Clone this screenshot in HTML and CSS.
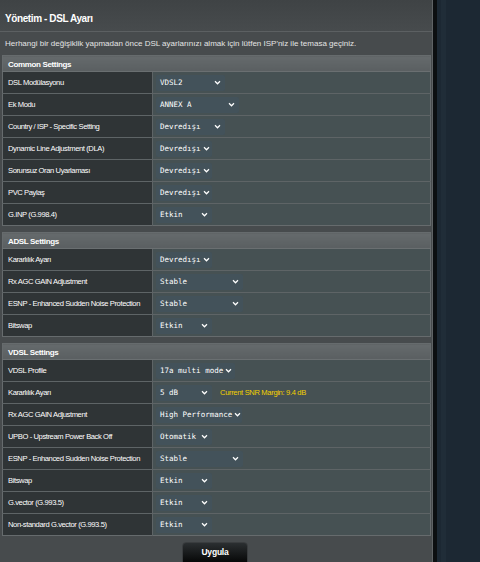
FILE: index.html
```html
<!DOCTYPE html>
<html lang="tr">
<head>
<meta charset="utf-8">
<title>Yönetim - DSL Ayarı</title>
<link rel="stylesheet" href="styles.css">
</head>
<body>
<div class="page">
  <main class="panel">
    <h1 class="title">Yönetim - DSL Ayarı</h1>
    <p class="desc">Herhangi bir değişiklik yapmadan önce DSL ayarlarınızı almak için lütfen ISP'niz ile temasa geçiniz.</p>

    <table class="settings">
      <tr><th colspan="2">Common Settings</th></tr>
      <tr><td class="label">DSL Modülasyonu</td><td><div class="select w69"><span>VDSL2</span><svg viewBox="0 0 8 6"><path d="M1 1.5 L4 4.5 L7 1.5"/></svg></div></td></tr>
      <tr><td class="label">Ek Modu</td><td><div class="select w83"><span>ANNEX A</span><svg viewBox="0 0 8 6"><path d="M1 1.5 L4 4.5 L7 1.5"/></svg></div></td></tr>
      <tr><td class="label">Country / ISP - Specific Setting</td><td><div class="select w69"><span>Devredışı</span><svg viewBox="0 0 8 6"><path d="M1 1.5 L4 4.5 L7 1.5"/></svg></div></td></tr>
      <tr><td class="label">Dynamic Line Adjustment (DLA)</td><td><div class="select w56"><span>Devredışı</span><svg viewBox="0 0 8 6"><path d="M1 1.5 L4 4.5 L7 1.5"/></svg></div></td></tr>
      <tr><td class="label">Sorunsuz Oran Uyarlaması</td><td><div class="select w56"><span>Devredışı</span><svg viewBox="0 0 8 6"><path d="M1 1.5 L4 4.5 L7 1.5"/></svg></div></td></tr>
      <tr><td class="label">PVC Paylaş</td><td><div class="select w56"><span>Devredışı</span><svg viewBox="0 0 8 6"><path d="M1 1.5 L4 4.5 L7 1.5"/></svg></div></td></tr>
      <tr><td class="label">G.INP (G.998.4)</td><td><div class="select w56"><span>Etkin</span><svg viewBox="0 0 8 6"><path d="M1 1.5 L4 4.5 L7 1.5"/></svg></div></td></tr>
    </table>

    <table class="settings">
      <tr><th colspan="2">ADSL Settings</th></tr>
      <tr><td class="label">Kararlılık Ayarı</td><td><div class="select w56"><span>Devredışı</span><svg viewBox="0 0 8 6"><path d="M1 1.5 L4 4.5 L7 1.5"/></svg></div></td></tr>
      <tr><td class="label">Rx AGC GAIN Adjustment</td><td><div class="select w87"><span>Stable</span><svg viewBox="0 0 8 6"><path d="M1 1.5 L4 4.5 L7 1.5"/></svg></div></td></tr>
      <tr><td class="label">ESNP - Enhanced Sudden Noise Protection</td><td><div class="select w87"><span>Stable</span><svg viewBox="0 0 8 6"><path d="M1 1.5 L4 4.5 L7 1.5"/></svg></div></td></tr>
      <tr><td class="label">Bitswap</td><td><div class="select w56"><span>Etkin</span><svg viewBox="0 0 8 6"><path d="M1 1.5 L4 4.5 L7 1.5"/></svg></div></td></tr>
    </table>

    <table class="settings">
      <tr><th colspan="2">VDSL Settings</th></tr>
      <tr><td class="label">VDSL Profile</td><td><div class="select w79"><span>17a multi mode</span><svg viewBox="0 0 8 6"><path d="M1 1.5 L4 4.5 L7 1.5"/></svg></div></td></tr>
      <tr><td class="label">Kararlılık Ayarı</td><td><div class="inline"><div class="select w56"><span>5 dB</span><svg viewBox="0 0 8 6"><path d="M1 1.5 L4 4.5 L7 1.5"/></svg></div><span class="snr">Current SNR Margin: 9.4 dB</span></div></td></tr>
      <tr><td class="label">Rx AGC GAIN Adjustment</td><td><div class="select w86"><span>High Performance</span><svg viewBox="0 0 8 6"><path d="M1 1.5 L4 4.5 L7 1.5"/></svg></div></td></tr>
      <tr><td class="label">UPBO - Upstream Power Back Off</td><td><div class="select w56"><span>Otomatik</span><svg viewBox="0 0 8 6"><path d="M1 1.5 L4 4.5 L7 1.5"/></svg></div></td></tr>
      <tr><td class="label">ESNP - Enhanced Sudden Noise Protection</td><td><div class="select w87"><span>Stable</span><svg viewBox="0 0 8 6"><path d="M1 1.5 L4 4.5 L7 1.5"/></svg></div></td></tr>
      <tr><td class="label">Bitswap</td><td><div class="select w56"><span>Etkin</span><svg viewBox="0 0 8 6"><path d="M1 1.5 L4 4.5 L7 1.5"/></svg></div></td></tr>
      <tr><td class="label">G.vector (G.993.5)</td><td><div class="select w56"><span>Etkin</span><svg viewBox="0 0 8 6"><path d="M1 1.5 L4 4.5 L7 1.5"/></svg></div></td></tr>
      <tr><td class="label">Non-standard G.vector (G.993.5)</td><td><div class="select w56"><span>Etkin</span><svg viewBox="0 0 8 6"><path d="M1 1.5 L4 4.5 L7 1.5"/></svg></div></td></tr>
    </table>

    <div class="actions"><button class="apply" type="button">Uygula</button></div>
  </main>
  <aside class="side"><div class="side-strip"></div></aside>
</div>
</body>
</html>
```

FILE: styles.css
```css
* { box-sizing: border-box; }

html, body {
  margin: 0;
  padding: 0;
  height: 562px;
  overflow: hidden;
  background: #1c2832;
}

body {
  font-family: "Liberation Sans", Arial, sans-serif;
  color: #ffffff;
}

.page {
  display: flex;
  height: 562px;
}

.panel {
  width: 433px;
  flex: none;
  background: #474b4d;
  border-right: 1px solid #5f6365;
  padding: 0 2px 0 2px;
}

.side {
  flex: 1;
  display: flex;
  border-left: 4px solid #0c0f11;
  background: #1c2833;
}

.side-strip {
  width: 5px;
  margin-left: 4px;
  background: #202d38;
}

.title {
  height: 32px;
  margin: 0 -2px;
  padding: 12px 0 0 5px;
  font-size: 10px;
  letter-spacing: -0.4px;
  font-weight: bold;
  line-height: 13px;
  border-bottom: 1px solid #5c6062;
  background: linear-gradient(#3f4345, #474b4d);
}

.desc {
  margin: 0;
  height: 23px;
  padding: 7px 0 0 3px;
  font-size: 8px;
  line-height: 10px;
  color: #e4e4e4;
  white-space: nowrap;
}

.settings {
  width: 429px;
  border-collapse: collapse;
  border: 1px solid #666b6d;
  margin-bottom: 6px;
}

.settings th {
  height: 16px;
  padding: 1px 0 0 5px;
  text-align: left;
  font-size: 8px;
  letter-spacing: -0.35px;
  font-weight: bold;
  background: linear-gradient(#656a6c, #5a5f61);
  border-bottom: 1px solid #6a6f71;
}

.settings td {
  height: 22px;
  padding: 0 0 0 3px;
  border-top: 1px solid #5e6466;
  background: #465153;
  vertical-align: middle;
}

.settings td.label {
  width: 150px;
  padding-left: 5px;
  font-size: 7.6px;
  letter-spacing: -0.4px;
  white-space: nowrap;
  background: #2f3436;
  border-right: 1px solid #5e6466;
}

.select {
  display: flex;
  align-items: center;
  justify-content: space-between;
  height: 16px;
  padding: 0 4px 0 4px;
  background: #43525a;
  border-radius: 2px;
  font-family: "DejaVu Sans Mono", "Liberation Mono", monospace;
  font-size: 7.5px;
  color: #ffffff;
  white-space: nowrap;
}

.select svg {
  width: 7px;
  height: 5px;
  flex: none;
  margin-left: 2px;
}

.select path {
  fill: none;
  stroke: #ffffff;
  stroke-width: 1.5;
}

.w56 { width: 56px; }
.w69 { width: 69px; }
.w79 { width: 79px; }
.w83 { width: 83px; }
.w86 { width: 86px; }
.w87 { width: 87px; }

.inline {
  display: flex;
  align-items: center;
  gap: 8px;
}

.snr {
  color: #f2d000;
  font-size: 7.6px;
  letter-spacing: -0.35px;
}

.actions {
  display: flex;
  justify-content: center;
  padding-right: 2px;
}

.apply {
  width: 66px;
  height: 22px;
  border: 1px solid #3a3d3f;
  border-radius: 4px 4px 0 0;
  background: linear-gradient(#2b2f31, #050606);
  color: #ffffff;
  font-family: "Liberation Sans", Arial, sans-serif;
  font-weight: bold;
  font-size: 8.5px;
  letter-spacing: -0.2px;
  padding: 0 0 2px 0;
}
```
